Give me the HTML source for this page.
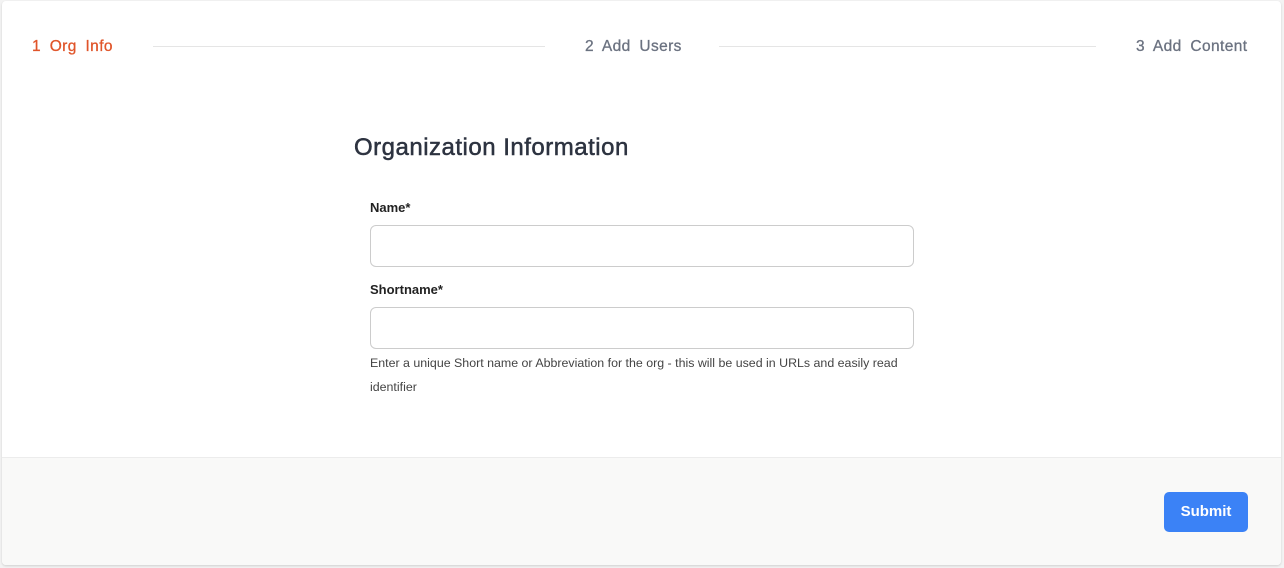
<!DOCTYPE html>
<html><head><style>
body{margin:0;width:1284px;height:568px;background:#f3f3f3;font-family:"Liberation Sans",sans-serif;position:relative;overflow:hidden}
.card{position:absolute;left:2px;top:1px;width:1279px;height:564px;background:#fff;border-radius:4px;box-shadow:0 1px 2px rgba(0,0,0,.15);overflow:hidden}
.step{position:absolute;top:37px;font-size:15.5px;color:#6b7280;word-spacing:4px;letter-spacing:0.4px;-webkit-text-stroke:0.3px #6b7280}
.line{position:absolute;top:45px;height:1px;background:#e5e5e5}
h2{position:absolute;left:352px;top:133px;margin:0;font-size:24px;font-weight:normal;color:#2d3340;letter-spacing:0.5px;-webkit-text-stroke:0.5px #2d3340}
label{position:absolute;font-size:13px;font-weight:bold;color:#222}
.in{position:absolute;left:368px;width:542px;height:40px;border:1px solid #ccc;border-radius:6px}
.help{position:absolute;left:368px;top:350px;width:548px;font-size:12.4px;line-height:24px;color:#444}
.foot{position:absolute;left:0;top:456px;width:100%;height:108px;background:#f9f9f8;border-top:1px solid #ececec}
.btn{position:absolute;left:1162px;top:34px;width:84px;height:40px;background:#3b82f6;border-radius:5px;color:#fff;font-weight:bold;font-size:15px;text-align:center;line-height:40px}
</style></head><body>
<div class="card">
<div class="step" style="left:30px;color:#e0552a;-webkit-text-stroke:0.3px #e0552a">1 Org Info</div>
<div class="line" style="left:151px;width:392px"></div>
<div class="step" style="left:583px">2 Add Users</div>
<div class="line" style="left:717px;width:377px"></div>
<div class="step" style="left:1134px">3 Add Content</div>
<h2>Organization Information</h2>
<label style="left:368px;top:199px">Name*</label>
<div class="in" style="top:224px"></div>
<label style="left:368px;top:281px">Shortname*</label>
<div class="in" style="top:306px"></div>
<div class="help">Enter a unique Short name or Abbreviation for the org - this will be used in URLs and easily read identifier</div>
<div class="foot"><div class="btn">Submit</div></div>
</div>
</body></html>
